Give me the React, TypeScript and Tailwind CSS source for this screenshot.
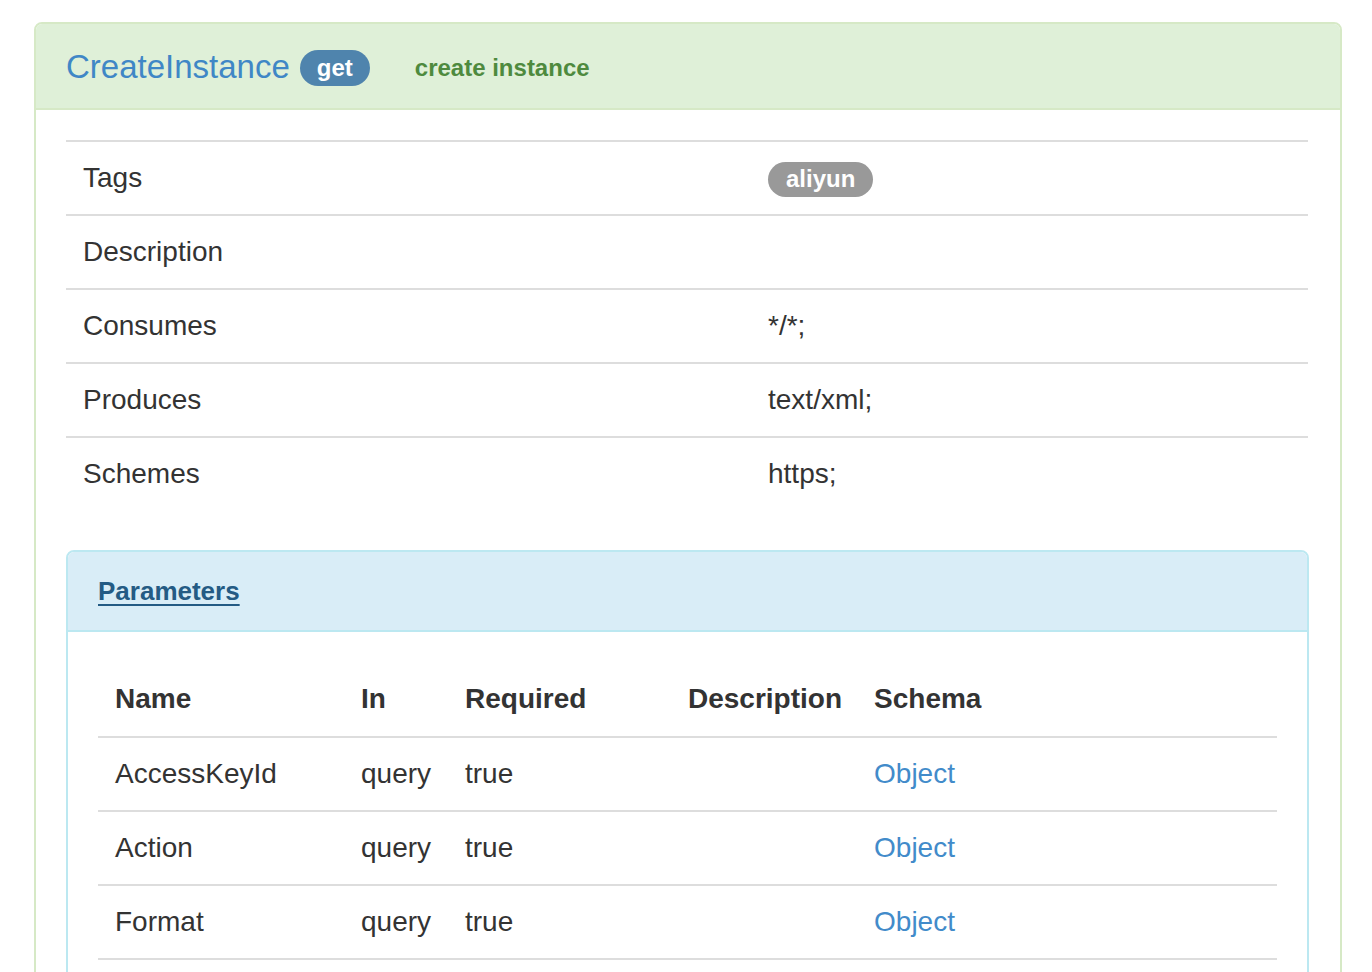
const info = [
  { label: 'Tags', value: 'tag' },
  { label: 'Description', value: '' },
  { label: 'Consumes', value: '*/*;' },
  { label: 'Produces', value: 'text/xml;' },
  { label: 'Schemes', value: 'https;' },
];

const params = [
  { name: 'AccessKeyId', in: 'query', required: 'true', schema: 'Object' },
  { name: 'Action', in: 'query', required: 'true', schema: 'Object' },
  { name: 'Format', in: 'query', required: 'true', schema: 'Object' },
];

export default function App() {
  return (
    <div className="min-h-screen bg-white text-[#333] font-['Liberation_Sans',Arial,sans-serif] pt-[22px] pl-[34px] overflow-hidden">
      <div className="w-[1308px] border-2 border-[#d6e9c6] rounded-t-[8px]">
        {/* operation heading */}
        <div className="h-[86px] bg-[#dff0d8] border-b-2 border-[#d6e9c6] rounded-t-[6px] flex items-center px-[30px]">
          <span className="text-[33px] text-[#3f87c6] leading-none">CreateInstance</span>
          <span className="ml-[10px] mt-[4px] h-[36px] px-[17px] rounded-full bg-[#4f84ad] text-white font-bold text-[24px] flex items-center">
            get
          </span>
          <span className="ml-[45px] mt-[4px] text-[24px] font-bold text-[#4e8a3e]">create instance</span>
        </div>

        <div className="pt-[30px] pl-[30px] pr-[32px] pb-[120px]">
          <table className="w-full border-collapse text-[28px] leading-[40px] mb-[40px]">
            <tbody>
              {info.map((row) => (
                <tr key={row.label} className="border-t-2 border-[#ddd]">
                  <td className="pl-[17px] pr-[16px] py-[16px] w-[686px] align-top">{row.label}</td>
                  <td className="pl-[16px] pr-[16px] py-[16px] align-top">
                    {row.value === 'tag' ? (
                      <div className="h-[40px] flex items-center">
                        <span className="h-[35px] mt-[2px] px-[18px] rounded-full bg-[#999] text-white font-bold text-[24px] leading-none flex items-center">
                          aliyun
                        </span>
                      </div>
                    ) : (
                      row.value
                    )}
                  </td>
                </tr>
              ))}
            </tbody>
          </table>

          {/* parameters panel */}
          <div className="mr-[-1px] border-2 border-[#bce8f1] rounded-t-[8px]">
            <div className="h-[80px] bg-[#d9edf7] border-b-2 border-[#bce8f1] rounded-t-[6px] flex items-center px-[30px]">
              <a className="text-[26px] font-bold text-[#245b84] underline underline-offset-[4px] decoration-2">Parameters</a>
            </div>
            <div className="p-[30px]">
              <table className="w-full border-collapse text-[28px] leading-[40px]">
                <thead>
                  <tr className="border-b-2 border-[#ddd]">
                    <th className="pl-[17px] pr-[16px] py-[17px] text-left font-bold w-[247px]">Name</th>
                    <th className="px-[16px] py-[17px] text-left font-bold w-[104px]">In</th>
                    <th className="px-[16px] py-[17px] text-left font-bold w-[223px]">Required</th>
                    <th className="px-[16px] py-[17px] text-left font-bold w-[185px]">Description</th>
                    <th className="px-[16px] py-[17px] text-left font-bold">Schema</th>
                  </tr>
                </thead>
                <tbody>
                  {params.map((p) => (
                    <tr key={p.name} className="border-b-2 border-[#ddd]">
                      <td className="pl-[17px] pr-[16px] py-[16px]">{p.name}</td>
                      <td className="px-[16px] py-[16px]">{p.in}</td>
                      <td className="px-[16px] py-[16px]">{p.required}</td>
                      <td className="px-[16px] py-[16px]"></td>
                      <td className="px-[16px] py-[16px] text-[#428bca]">{p.schema}</td>
                    </tr>
                  ))}
                </tbody>
              </table>
            </div>
          </div>
        </div>
      </div>
    </div>
  );
}
